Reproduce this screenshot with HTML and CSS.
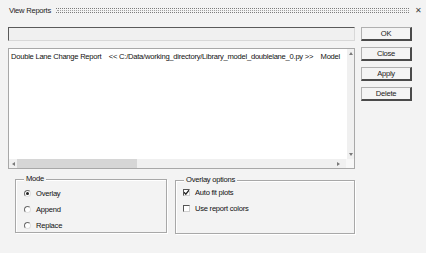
FILE: index.html
```html
<!DOCTYPE html>
<html>
<head>
<meta charset="utf-8">
<link rel="stylesheet" href="styles.css">
</head>
<body>
<div class="dialog">
  <div class="titlebar">
    <span class="title">View Reports</span>
    <div class="grip"></div>
    <span class="close">✕</span>
  </div>
  <div class="main">
    <div class="leftcol">
      <div class="field"></div>
      <div class="list">
        <div class="listarea">
          <div class="rows">
            <div class="row">Double Lane Change Report &nbsp;&nbsp; &lt;&lt; C:/Data/working_directory/Library_model_doublelane_0.py &gt;&gt; &nbsp;&nbsp; Model</div>
          </div>
          <div class="vscroll">
            <span class="arrow up"></span>
            <span class="arrow down"></span>
          </div>
        </div>
        <div class="hbar">
          <div class="hscroll">
            <span class="arrow left"></span>
            <div class="thumb"></div>
            <span class="arrow right"></span>
          </div>
          <div class="corner"></div>
        </div>
      </div>
    </div>
    <div class="buttons">
      <div class="btn">OK</div>
      <div class="btn">Close</div>
      <div class="btn">Apply</div>
      <div class="btn">Delete</div>
    </div>
  </div>
  <div class="groups">
    <div class="group mode">
      <span class="legend">Mode</span>
      <div class="opt"><span class="radio on"></span>Overlay</div>
      <div class="opt"><span class="radio"></span>Append</div>
      <div class="opt"><span class="radio"></span>Replace</div>
    </div>
    <div class="group overlay">
      <span class="legend">Overlay options</span>
      <div class="opt"><span class="check on"><svg width="7" height="7" viewBox="0 0 7 7"><path d="M1 3.2 L2.8 5.2 L6 1.2" fill="none" stroke="#222" stroke-width="1.3"/></svg></span>Auto fit plots</div>
      <div class="opt"><span class="check"></span>Use report colors</div>
    </div>
  </div>
</div>
</body>
</html>
```

FILE: styles.css
```css
* { box-sizing: border-box; }
html, body { margin: 0; padding: 0; }
body {
  width: 426px;
  height: 253px;
  background: #f3f3f3;
  font-family: "Liberation Sans", Arial, sans-serif;
  font-size: 7.6px;
  letter-spacing: -0.25px;
  color: #111;
  overflow: hidden;
}
.dialog { padding: 0 0 0 8px; }
.titlebar {
  height: 21px;
  display: flex;
  align-items: center;
  padding-left: 1px;
}
.title { color: #222; width: 46px; }
.grip {
  flex: 1;
  height: 5px;
  margin-left: 1px;
  margin-right: 6px;
  border-top: 1px dotted #7a7a7a;
  border-bottom: 1px dotted #7a7a7a;
  position: relative;
}
.grip::after {
  content: "";
  position: absolute;
  left: 1px; right: 0; top: 1px;
  border-top: 1px dotted #a0a0a0;
}
.close { font-size: 8px; color: #444; width: 10px; margin-right: 1px; letter-spacing: 0; }
.main {
  display: flex;
  gap: 6px;
  margin-top: 6px;
}
.leftcol {
  width: 347px;
  display: flex;
  flex-direction: column;
  gap: 7px;
}
.field {
  height: 14px;
  background: #f0f0f0;
  border-top: 1px solid #5a5a5a;
  border-left: 1px solid #5a5a5a;
  border-right: 1px solid #d8d8d8;
  border-bottom: 1px solid #d8d8d8;
}
.list {
  height: 121px;
  border: 1px solid #a8a8a8;
  background: #fff;
  display: flex;
  flex-direction: column;
}
.listarea { flex: 1; display: flex; }
.rows { flex: 1; padding: 2px 0 0 2px; }
.row { white-space: nowrap; overflow: hidden; width: 336px; line-height: 11px; }
.vscroll {
  width: 8px;
  background: #f0f0f0;
  display: flex;
  flex-direction: column;
  justify-content: space-between;
  align-items: center;
  padding: 3px 0 3px;
}
.hbar { height: 9px; display: flex; }
.hscroll {
  flex: 1;
  background: #f0f0f0;
  display: flex;
  align-items: center;
  padding: 0 3px;
}
.thumb {
  width: 120px;
  height: 9px;
  background: #d6d6d6;
  margin-left: 2px;
}
.hscroll .right { margin-left: auto; margin-right: 3px; }
.corner { width: 8px; background: #f7f7f7; }
.arrow { width: 0; height: 0; display: block; }
.up { border-left: 2.5px solid transparent; border-right: 2.5px solid transparent; border-bottom: 3px solid #7a7a7a; }
.down { border-left: 2.5px solid transparent; border-right: 2.5px solid transparent; border-top: 3px solid #7a7a7a; }
.left { border-top: 2.5px solid transparent; border-bottom: 2.5px solid transparent; border-right: 3px solid #7a7a7a; }
.right { border-top: 2.5px solid transparent; border-bottom: 2.5px solid transparent; border-left: 3px solid #7a7a7a; }
.buttons {
  width: 51px;
  display: flex;
  flex-direction: column;
  gap: 6px;
}
.btn {
  height: 14px;
  background: #f4f4f4;
  border-top: 1px solid #b0b0b0;
  border-left: 1px solid #b0b0b0;
  border-right: 2px solid #4a4a4a;
  border-bottom: 2px solid #4a4a4a;
  display: flex;
  align-items: center;
  justify-content: center;
  color: #222;
}
.groups {
  display: flex;
  gap: 8px;
  margin-top: 10px;
  padding-left: 7px;
  align-items: flex-start;
}
.group {
  position: relative;
  border: 1px solid #a8a8a8;
  box-shadow: inset 1px 1px 0 #fff, 1px 1px 0 #fff;
  display: flex;
  flex-direction: column;
}
.mode { width: 152px; height: 54px; padding: 8px 0 0 8px; gap: 6px; }
.overlay { width: 180px; height: 54px; padding: 6px 0 0 7px; gap: 6px; margin-top: 1px; }
.legend {
  position: absolute;
  top: -6px;
  left: 8px;
  background: #f3f3f3;
  padding: 0 2px;
  line-height: 10px;
}
.opt { display: flex; align-items: center; height: 10px; gap: 5px; }
.radio {
  width: 7px; height: 7px;
  border-radius: 50%;
  border: 1px solid #6a6a6a;
  border-right-color: #e0e0e0;
  border-bottom-color: #e0e0e0;
  background: #fff;
  display: flex; align-items: center; justify-content: center;
}
.radio.on::after {
  content: "";
  width: 3px; height: 3px; border-radius: 50%; background: #222;
}
.check {
  width: 7px; height: 7px;
  border: 1px solid #555;
  border-right-color: #d0d0d0;
  border-bottom-color: #d0d0d0;
  background: #fff;
  display: flex; align-items: center; justify-content: center;
  overflow: hidden;
}
.check svg { display: block; flex: none; }
```
